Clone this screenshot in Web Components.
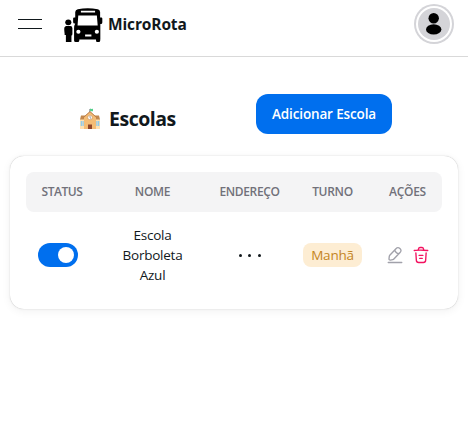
<!DOCTYPE html>
<html lang="pt-BR">
<head>
<meta charset="utf-8">
<title>MicroRota</title>
<style>
html, body { margin: 0; background: #fff; color: #11181c; font-family: "Open Sans", "Noto Sans", sans-serif; }
</style>
</head>
<body>
<school-page></school-page>
<script>
const define = (name, html) => customElements.define(name, class extends HTMLElement {
  constructor() {
    super();
    const t = document.createElement('template');
    t.innerHTML = html;
    this.attachShadow({ mode: 'open' }).append(t.content.cloneNode(true));
  }
});

define('menu-toggle', `
<style>:host{display:flex;flex-direction:column;gap:8px;width:24px}i{height:1px;background:#11181c}</style>
<i></i><i></i>`);

define('bus-logo', `
<style>:host{display:block;width:42px;height:36px}svg{display:block}</style>
<svg width="42" height="36" viewBox="0 0 40 36" preserveAspectRatio="none">
  <path d="M15 1.2Q24.500-.5 34 1.200Q36 1.500 36.300 4V9.500H37.500Q38.400 9.500 38.400 10.500V14.500Q38.400 16 37 16H36.500V31.500H36.400V32.500Q36.400 34 35 34H33.500Q32.400 34 32.400 32.500V31.500H16.500V32.500Q16.500 34 15 34H13Q11.500 34 11.500 32.500V20.500Q11.600 17 12.600 15.500H12Q10.600 15.500 10.600 14V10.500Q10.600 9.500 11.500 9.500H12.600V4Q12.800 1.600 15 1.200Z"/>
  <path fill="#fff" d="M18 2.700H31.500V4.600H18ZM15.500 7.500H33.200L34 17.500H14.800ZM22 26.500H28V28.500H22Z"/>
  <circle cx="15.600" cy="23.800" r="2" fill="#fff"/><circle cx="33.200" cy="23.800" r="2" fill="#fff"/>
  <circle cx="6" cy="14.300" r="2.900"/>
  <path d="M4 18H8Q9.800 18 9.900 20.300V26Q9.800 27.500 9 27.500V34H3.700V27H2.500V25.800Q1.900 21 2.300 19.500Q2.900 18 4 18Z"/>
</svg>`);

define('user-avatar', `
<style>:host{display:block;width:32px;height:32px;border-radius:50%;background:#d4d4d8;box-shadow:0 0 0 2px #fff,0 0 0 4px #d4d4d8}svg{display:block}</style>
<svg width="32" height="32" viewBox="0 0 32 32"><circle cx="15.700" cy="10.200" r="5.200"/><ellipse cx="15.700" cy="21.400" rx="7.700" ry="5.200"/></svg>`);

define('app-bar', `
<style>
:host{display:flex;align-items:center;height:56px;padding:0 18px;border-bottom:1px solid #d9d9d9}
bus-logo{margin-left:20px;margin-top:-4px}
b{margin-left:4px;font-size:15.500px;font-weight:700;line-height:24px;letter-spacing:-.13px;margin-top:-8px}
menu-toggle{margin-top:-9px}
user-avatar{margin-left:auto;margin-top:-8px}
</style>
<menu-toggle></menu-toggle><bus-logo></bus-logo><b>MicroRota</b><user-avatar></user-avatar>`);

define('school-icon', `
<style>:host{display:block;width:22px;height:22px}svg{display:block}</style>
<svg width="22" height="22" viewBox="0 0 22 22">
  <path fill="#ffe1b2" d="M1 11H21V21H1Z"/><path fill="#c28950" d="M2 7.500H20L21 11.500H1Z"/>
  <path fill="#f4bd76" d="M5 21V8.500L11 3.500L17 8.500V21Z"/>
  <path fill="none" stroke="#b87a48" stroke-width="1" d="M4.500 9.500L11 3.600L17.500 9.500"/>
  <path stroke="#687778" stroke-width=".7" d="M10.700 1V4"/><path fill="#55ce8c" d="M11 .6Q12 1.200 14 .8V3.200Q12.500 3.500 11 2.700Z"/>
  <circle cx="11" cy="9.500" r="2.300" fill="#fff" stroke="#b9824d" stroke-width=".5"/><path d="M11 8V9.700L12 10.500" fill="none" stroke="#555" stroke-width=".6"/>
  <path fill="#88c9ef" d="M1.700 13H2.900V18H1.700ZM3.500 13H4.700V18H3.500ZM17.300 13H18.500V18H17.300ZM19.100 13H20.300V18H19.100Z"/>
  <path fill="#914629" d="M9 16.500H13V21H9Z"/>
</svg>`);

define('page-title', `
<style>:host{display:flex;align-items:center;gap:8px}h1{margin:0;font-size:19.500px;line-height:28px;font-weight:700;letter-spacing:-.47px}</style>
<school-icon></school-icon><h1><slot></slot></h1>`);

define('primary-button', `
<style>:host{display:block}button{display:block;width:136px;height:40px;padding:0;border:0;border-radius:12px;background:#006fee;color:#fff;font:600 13.500px/20px "Open Sans","Noto Sans",sans-serif;letter-spacing:-.14px;white-space:nowrap}</style>
<button><slot></slot></button>`);

define('toggle-switch', `
<style>:host{display:flex;align-items:center;justify-content:flex-end;width:40px;height:24px;padding:0 4px;box-sizing:border-box;border-radius:12px;background:#006fee}i{width:16px;height:16px;border-radius:50%;background:#fff}</style><i></i>`);

define('shift-chip', `
<style>:host{display:block;width:59px;height:24px;border-radius:8px;background:#fdedd3;color:#c4841d;font-size:13.500px;line-height:24px;text-align:center;letter-spacing:-.2px}</style><slot></slot>`);

define('more-dots', `
<style>:host{display:flex;gap:6.500px}i{width:3px;height:3px;border-radius:50%;background:#11181c}</style><i></i><i></i><i></i>`);

define('row-actions', `
<style>:host{display:flex;gap:8px}svg{display:block;width:18px;height:18px;fill:none;stroke-linecap:round;stroke-linejoin:round;stroke-width:1.500}</style>
<svg viewBox="0 0 20 20" stroke="#a1a1aa"><path d="M11.050 3L4.208 10.242C3.950 10.517 3.700 11.058 3.650 11.433L3.342 14.133C3.233 15.108 3.933 15.775 4.900 15.608L7.583 15.150C7.958 15.083 8.483 14.808 8.742 14.525L15.583 7.283C16.767 6.033 17.300 4.608 15.458 2.867C13.625 1.142 12.233 1.750 11.050 3ZM9.908 4.208C10.267 6.508 12.133 8.267 14.450 8.500M2.500 18.333H17.500"/></svg>
<svg viewBox="0 0 20 20" stroke="#f31260"><path d="M17.500 4.983C14.725 4.708 11.933 4.567 9.150 4.567C7.500 4.567 5.850 4.650 4.200 4.817L2.500 4.983M7.083 4.142L7.267 3.050C7.400 2.258 7.500 1.667 8.908 1.667H11.092C12.500 1.667 12.608 2.292 12.733 3.058L12.917 4.142M15.708 7.617L15.167 16.008C15.075 17.317 15 18.333 12.675 18.333H7.325C5 18.333 4.925 17.317 4.833 16.008L4.292 7.617M8.608 13.750H11.383M7.917 10.417H12.083"/></svg>`);

define('school-table', `
<style>
:host{display:block;box-sizing:border-box;width:448px;height:153px;margin:0 0 0 10px;padding:16px;border-radius:14px;background:#fff;box-shadow:0 0 5px #00000005,0 2px 10px #0000000f,0 0 1px #0000004d}
.grid{display:grid;grid-template-columns:72px 109px 85px 81px 69px;justify-items:center;align-items:center}
.head{height:40px;border-radius:8px;background:#f4f4f5;color:#71717a;font-size:12px;font-weight:600;line-height:16px}
.row{padding-top:13px;font-size:13.500px;line-height:20px;text-align:center}
.row toggle-switch{justify-self:start;margin-left:12px}
.name{width:70px;letter-spacing:-.24px}
</style>
<div class="grid head"><span style="letter-spacing:-.45px">STATUS</span><span style="letter-spacing:-.3px">NOME</span><span style="letter-spacing:-.35px">ENDEREÇO</span><span style="letter-spacing:-.3px">TURNO</span><span style="letter-spacing:-.3px">AÇÕES</span></div>
<div class="grid row"><toggle-switch></toggle-switch><span class="name">Escola Borboleta Azul</span><more-dots></more-dots><shift-chip>Manhã</shift-chip><row-actions></row-actions></div>`);

define('school-page', `
<style>
:host{display:block;min-height:447px}
.heading{display:flex;align-items:center;height:40px;padding:37px 0 22px 79px}
page-title{width:177px;padding-top:10px}
</style>
<app-bar></app-bar>
<main><div class="heading"><page-title>Escolas</page-title><primary-button>Adicionar Escola</primary-button></div><school-table></school-table></main>`);
</script>
</body>
</html>
